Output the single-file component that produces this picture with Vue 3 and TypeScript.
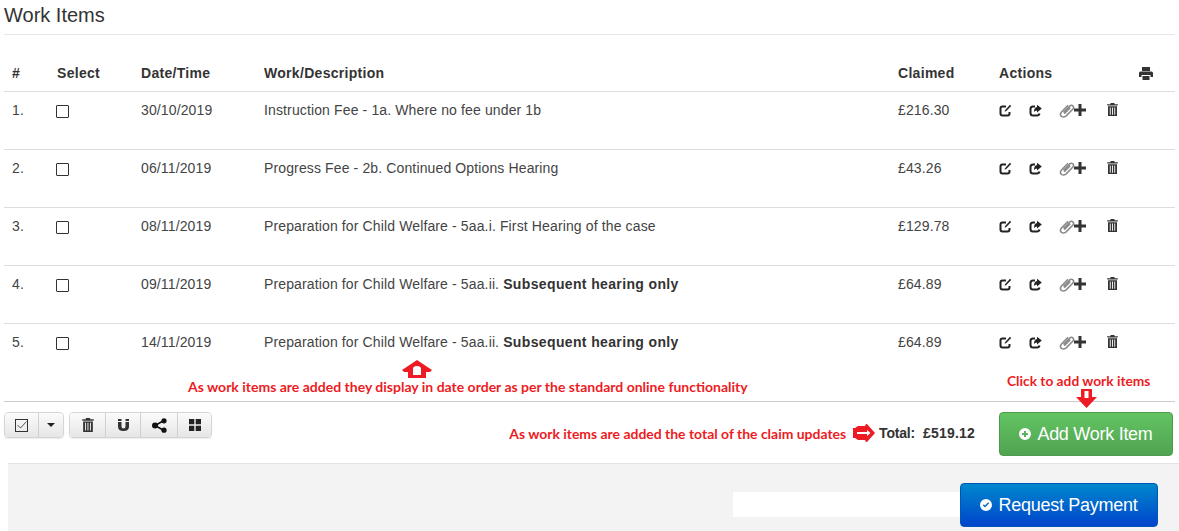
<script setup lang="ts">
interface Row { n: string; date: string; desc: string; bold?: string; amt: string }
const rows: Row[] = [
  { n: '1.', date: '30/10/2019', desc: 'Instruction Fee - 1a. Where no fee under 1b', amt: '£216.30' },
  { n: '2.', date: '06/11/2019', desc: 'Progress Fee - 2b. Continued Options Hearing', amt: '£43.26' },
  { n: '3.', date: '08/11/2019', desc: 'Preparation for Child Welfare - 5aa.i. First Hearing of the case', amt: '£129.78' },
  { n: '4.', date: '09/11/2019', desc: 'Preparation for Child Welfare - 5aa.ii. ', bold: 'Subsequent hearing only', amt: '£64.89' },
  { n: '5.', date: '14/11/2019', desc: 'Preparation for Child Welfare - 5aa.ii. ', bold: 'Subsequent hearing only', amt: '£64.89' },
]
</script>

<template>
  <div class="page">
    <h1 class="title">Work Items</h1>
    <div class="table">
      <div class="row head">
        <div>#</div><div>Select</div><div>Date/Time</div><div>Work/Description</div><div>Claimed</div><div>Actions</div>
        <div>
          <svg class="print" width="14" height="13" viewBox="0 0 14 13"><path fill="#333" d="M3 0h8v4H3zM1.500 4.500h11q1.500 0 1.500 1.500v4h-2.500V8h-9v2H0V6q0-1.500 1.500-1.500zM3.500 9h7v4h-7z"/></svg>
        </div>
      </div>
      <div v-for="r in rows" :key="r.n" class="row item">
        <div>{{ r.n }}</div>
        <div><span class="check"></span></div>
        <div>{{ r.date }}</div>
        <div>{{ r.desc }}<b v-if="r.bold">{{ r.bold }}</b></div>
        <div>{{ r.amt }}</div>
        <div class="actions">
          <svg class="a-edit" width="13" height="13" viewBox="0 0 13 13"><path fill="none" stroke="#222" stroke-width="2" d="M10.500 8V9.500Q10.500 11.500 8.500 11.500H3.500Q1.500 11.500 1.500 9.500V4.500Q1.500 2.500 3.500 2.500H7"/><path fill="#222" d="M11 .8L12.200 2 7 7.200 5.600 7.600 6 6.200z"/></svg>
          <svg class="a-share" width="13" height="13" viewBox="0 0 13 13"><path fill="none" stroke="#222" stroke-width="2" d="M10.500 9.500Q10 11.500 8 11.500H4Q1.500 11.500 1.500 9V5Q1.500 2.500 4 2.500H6"/><path fill="#222" d="M8 .8l4.800 3.700L8 8.500V6.500Q6 6.500 5 8 5 3.500 8 3z"/></svg>
          <svg class="a-clip" width="17" height="15" viewBox="0 0 17 15"><path fill="none" stroke="#8a8a8a" stroke-width="1.600" d="M4.500 9.500l6-6.300q1.800-1.700 3.400-.4 1.500 1.500-.2 3.400l-6.800 6.900Q4.500 14.700 2.400 13.300.4 11.500 2.500 9L9 2.300M11.200 4.600L5.200 10.800"/></svg>
          <svg class="a-plus" width="12" height="12" viewBox="0 0 12 12"><path fill="#333" d="M4.500 0h3v4.500H12v3H7.500V12h-3V7.500H0v-3h4.500z"/></svg>
          <svg class="a-trash" width="11" height="13" viewBox="0 0 11 13"><path fill="#333" d="M3.500 0h4v1.200h3.300v1.300H.2V1.200h3.300zM1 3.200h9V13H1zM2.800 4.500v7.200h.9V4.500zM5 4.500v7.200h.9V4.500zM7.300 4.500v7.200h.9V4.500z" fill-rule="evenodd"/></svg>
        </div>
      </div>
    </div>

    <div class="notes">
      <svg class="up-arrow" width="30" height="18" viewBox="0 0 30 18"><path fill="#ed1c24" fill-rule="evenodd" d="M15 0l15 10-2 2h-4v6H6v-6H2l-2-2zM11 15h8v-6q0-3-4-3t-4 3z"/></svg>
      <span class="note note-date">As work items are added they display in date order as per the standard online functionality</span>
      <span class="note note-click">Click to add work items</span>
      <svg class="down-arrow" width="21" height="19" viewBox="0 0 21 19"><path fill="#ed1c24" fill-rule="evenodd" d="M5 0h11v8h5L10.500 19 0 8h5zM8.500 2v7h4V2z"/></svg>
    </div>

    <div class="toolbar">
      <div class="groups">
        <div class="btn-group">
          <button class="tb tb-check"><span class="bigcheck"><svg width="10" height="8" viewBox="0 0 10 8"><path fill="none" stroke="#555" stroke-width="1" d="M.5 4l3 3L9.500.5"/></svg></span></button>
          <button class="tb tb-caret"><span class="caret"></span></button>
        </div>
        <div class="btn-group">
          <button class="tb tb-trash"><svg width="12" height="14" viewBox="0 0 11 13"><path fill="#333" d="M3.500 0h4v1.200h3.300v1.300H.2V1.200h3.300zM1 3.200h9V13H1zM2.800 4.500v7.200h.9V4.500zM5 4.500v7.200h.9V4.500zM7.300 4.500v7.200h.9V4.500z" fill-rule="evenodd"/></svg></button>
          <button class="tb tb-mag"><svg width="11" height="12" viewBox="0 0 11 12"><path fill="#333" d="M0 3h3.500v4.500q0 2 2 2t2-2V3H11v4.500Q11 12 5.500 12T0 7.500z"/><path fill="#333" d="M0 0h3.500v2H0zM7.500 0H11v2H7.500z"/></svg></button>
          <button class="tb tb-share"><svg width="15" height="15" viewBox="0 0 15 15"><path fill="none" stroke="#111" stroke-width="1.600" d="M12 2.500L3 7.500l9 5"/><circle cx="3" cy="7.500" r="3" fill="#111"/><circle cx="12" cy="2.800" r="2.600" fill="#111"/><circle cx="12" cy="12.200" r="2.600" fill="#111"/></svg></button>
          <button class="tb tb-grid"><svg width="12" height="12" viewBox="0 0 12 12"><path fill="#222" d="M0 0h5.300v5.300H0zM6.700 0H12v5.300H6.700zM0 6.700h5.300V12H0zM6.700 6.700H12V12H6.700z"/></svg></button>
        </div>
      </div>
      <div class="total-wrap">
        <span class="note note-total">As work items are added the total of the claim updates</span>
        <svg class="right-arrow" width="22" height="18" viewBox="0 0 22 18"><path fill="#ed1c24" fill-rule="evenodd" d="M0 4h2l3-2h7l1-2h1l8 9-8 9h-1l-1-2H5l-3-2H0zM4 8v2h10v2l3.500-3L14 6v2z"/></svg>
        <span class="total"><b class="t-label">Total:</b><b>£519.12</b></span>
      </div>
      <button class="cta green">
        <svg width="12" height="12" viewBox="0 0 12 12"><path fill="#fff" fill-rule="evenodd" d="M6 0a6 6 0 1 1 0 12A6 6 0 0 1 6 0zM5 3v2H3v2h2v2h2V7h2V5H7V3z"/></svg>
        Add Work Item
      </button>
    </div>

    <div class="panel">
      <div class="whitebar"></div>
      <button class="cta blue">
        <svg width="12" height="12" viewBox="0 0 12 12"><path fill="#fff" fill-rule="evenodd" d="M6 0a6 6 0 1 1 0 12A6 6 0 0 1 6 0zM2.800 6.200L5 8.400l4.200-4.200-1-1L5 6.400 3.800 5.200z"/></svg>
        Request Payment
      </button>
    </div>
  </div>
</template>

<style>
html, body { margin: 0; background: #fff; overflow: hidden; }
</style>

<style scoped>
.page {
  width: 1179px;
  height: 531px;
  overflow: hidden;
  font-family: "Liberation Sans", Arial, sans-serif;
  font-size: 14px;
  color: #333;
  box-sizing: border-box;
}
.title {
  margin: 0 4px;
  height: 34px;
  font-size: 20px;
  font-weight: 400;
  line-height: 30px;
  color: #333;
  border-bottom: 1px solid #e6e6e6;
}
.table { margin: 0 4px; }
.row {
  display: grid;
  grid-template-columns: 45px 84px 123px 634px 101px 140px 44px;
  box-sizing: border-box;
}
.row > div { padding-left: 8px; }
.head {
  height: 57px;
  padding-top: 30px;
  font-weight: 700;
  line-height: 16px;
  letter-spacing: 0.3px;
  color: #333;
  border-bottom: 1px solid #ddd;
}
.print { display: block; margin-top: 2px; }
.item {
  height: 58px;
  padding-top: 9px;
  line-height: 18px;
  letter-spacing: 0.13px;
  border-bottom: 1px solid #ddd;
  color: #444;
}
.item:last-child { border-bottom: none; height: 57px; }
.item b { color: #333; letter-spacing: 0.36px; }
.check {
  display: block;
  width: 11px;
  height: 11px;
  margin-top: 4px;
  margin-left: -1px;
  border: 1px solid #333;
  border-radius: 1px;
}
.actions { display: flex; align-items: flex-start; padding-top: 1px; }
.actions svg { display: block; flex: none; }
.a-edit { margin-top: 2px; }
.a-share { margin: 2px 0 0 17px; }
.a-clip { margin: 1px 0 0 17px; }
.a-plus { margin: 2px 0 0 -2px; }
.a-trash { margin: 1px 0 0 21px; }

.notes {
  position: relative;
  height: 20px;
  margin: 0 4px;
  border-bottom: 1px solid #ccc;
}
.note {
  font-family: Lato, "Open Sans", sans-serif;
  font-weight: 700;
  font-size: 13.95px;
  color: #ed1c24;
  white-space: nowrap;
}
.notes .note, .notes svg { position: absolute; }
.up-arrow { left: 398px; top: -21px; }
.note-date { left: 184px; top: -3px; line-height: 18px; font-size: 14px; }
.note-click { left: 1003px; top: -9px; line-height: 18px; font-size: 13.75px; }
.down-arrow { left: 1072px; top: 8px; }

.toolbar {
  display: flex;
  align-items: flex-start;
  height: 61px;
  padding: 10px 6px 0 4px;
  box-sizing: border-box;
}
.groups { display: flex; gap: 5px; }
.btn-group {
  display: flex;
  height: 26px;
  border: 1px solid #d6d6d6;
  border-radius: 4px;
  box-sizing: border-box;
  overflow: hidden;
  box-shadow: 0 1px 1px rgba(0,0,0,.08);
}
.tb {
  display: flex;
  align-items: center;
  justify-content: center;
  padding: 0;
  border: none;
  border-left: 1px solid #d0d0d0;
  background: linear-gradient(#fbfbfb, #e6e6e6);
}
.tb:first-child { border-left: none; }
.tb-check { width: 33px; }
.tb-caret { width: 25px; }
.tb-trash { width: 35px; }
.tb-mag { width: 35px; }
.tb-share { width: 37px; }
.tb-grid { width: 34px; }
.bigcheck {
  display: flex;
  align-items: center;
  justify-content: center;
  width: 11px;
  height: 11px;
  border: 1px solid #333;
}
.caret {
  width: 0;
  height: 0;
  border-left: 4px solid transparent;
  border-right: 4px solid transparent;
  border-top: 4px solid #222;
}
.total-wrap {
  display: flex;
  align-items: center;
  margin-left: auto;
  height: 26px;
  margin-top: 8px;
  margin-right: 24px;
}
.note-total { margin-right: 7px; }
.right-arrow { margin-right: 4px; }
.total {
  display: flex;
  gap: 8px;
  color: #333;
  letter-spacing: 0.2px;
}
.t-label { letter-spacing: -0.2px; }
.cta {
  display: flex;
  align-items: center;
  justify-content: center;
  gap: 6px;
  height: 44px;
  padding: 0;
  color: #fff;
  font-family: "Liberation Sans", Arial, sans-serif;
  font-size: 18px;
  letter-spacing: -0.27px;
  border-radius: 4px;
  box-sizing: border-box;
}
.green {
  width: 174px;
  background: linear-gradient(#62c462, #51a351);
  border: 1px solid #4c9a4c;
}
.panel {
  display: flex;
  justify-content: flex-end;
  align-items: flex-start;
  margin-left: 8px;
  height: 68px;
  padding: 19px 21px 0 0;
  box-sizing: border-box;
  background: #f3f3f3;
  border-top: 1px solid #e3e3e3;
}
.whitebar {
  width: 227px;
  height: 25px;
  margin-top: 9px;
  background: #fff;
}
.blue {
  width: 198px;
  background: linear-gradient(#0088cc, #0044cc);
  border: 1px solid #0055bb;
}
</style>
